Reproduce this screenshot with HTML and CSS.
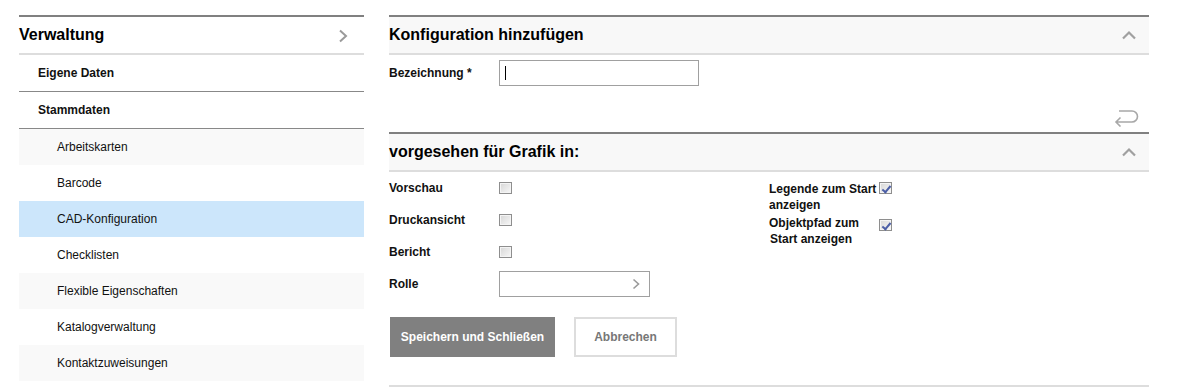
FILE: index.html
```html
<!DOCTYPE html>
<html lang="de">
<head>
  <meta charset="UTF-8" />
  <title>CAD-Konfiguration</title>
  <link rel="stylesheet" href="styles.css">
</head>
<body>
  <div class="page">

    <nav class="sidebar">
      <div class="side-head">
        <span>Verwaltung</span>
        <svg class="chev" width="12" height="14" viewBox="0 0 12 14"><path d="M3 1.5 L9 7 L3 12.5" fill="none" stroke="#9a9a9a" stroke-width="2"/></svg>
      </div>
      <div class="side-group">Eigene Daten</div>
      <div class="side-group">Stammdaten</div>
      <ul class="side-list">
        <li class="alt">Arbeitskarten</li>
        <li>Barcode</li>
        <li class="active">CAD-Konfiguration</li>
        <li>Checklisten</li>
        <li class="alt">Flexible Eigenschaften</li>
        <li>Katalogverwaltung</li>
        <li class="alt">Kontaktzuweisungen</li>
      </ul>
    </nav>

    <main class="main">
      <section class="panel">
        <div class="panel-head">
          <h2>Konfiguration hinzufügen</h2>
          <svg width="16" height="10" viewBox="0 0 16 10"><path d="M2 8.5 L8 2.5 L14 8.5" fill="none" stroke="#a0a0a0" stroke-width="2.2"/></svg>
        </div>
        <div class="panel-body">
          <div class="field">
            <label class="lbl">Bezeichnung *</label>
            <div class="text-input"><span class="caret"></span></div>
          </div>
          <div class="undo-row">
            <svg width="26" height="19" viewBox="0 0 26 19"><path d="M5 3 H18 A5.5 5.5 0 0 1 18 14 H2 M6.5 9.5 L2 14 L6.5 18.5" fill="none" stroke="#a8a8a8" stroke-width="1.6"/></svg>
          </div>
        </div>
      </section>

      <section class="panel">
        <div class="panel-head">
          <h2>vorgesehen für Grafik in:</h2>
          <svg width="16" height="10" viewBox="0 0 16 10"><path d="M2 8.5 L8 2.5 L14 8.5" fill="none" stroke="#a0a0a0" stroke-width="2.2"/></svg>
        </div>
        <div class="grid">
          <div class="col-left">
            <div class="field row">
              <label class="lbl">Vorschau</label>
              <input type="checkbox" class="cb">
            </div>
            <div class="field row">
              <label class="lbl">Druckansicht</label>
              <input type="checkbox" class="cb">
            </div>
            <div class="field row">
              <label class="lbl">Bericht</label>
              <input type="checkbox" class="cb">
            </div>
            <div class="field row">
              <label class="lbl">Rolle</label>
              <div class="select">
                <svg width="10" height="12" viewBox="0 0 10 12"><path d="M2.5 1.5 L7.5 6 L2.5 10.5" fill="none" stroke="#9a9a9a" stroke-width="1.6"/></svg>
              </div>
            </div>
          </div>
          <div class="col-right">
            <div class="field multi">
              <label class="lbl">Legende zum Start anzeigen</label>
              <input type="checkbox" class="cb" checked>
            </div>
            <div class="field multi second">
              <label class="lbl">Objektpfad zum<br><span class="indent">Start anzeigen</span></label>
              <input type="checkbox" class="cb" checked>
            </div>
          </div>
        </div>
        <div class="actions">
          <button class="btn primary">Speichern und Schließen</button>
          <button class="btn secondary">Abbrechen</button>
        </div>
      </section>
      <div class="end-line"></div>
    </main>

  </div>
</body>
</html>
```

FILE: styles.css
```css
body {
  margin: 0;
  padding: 15px 0 0;
  font-family: "Liberation Sans", Arial, sans-serif;
  font-size: 12px;
  color: #111;
  background: #fff;
}

.page {
  display: flex;
  align-items: flex-start;
}

/* sidebar */

.sidebar {
  margin-left: 19px;
  width: 345px;
  border-top: 2px solid #808080;
}

.side-head {
  height: 36px;
  display: flex;
  align-items: center;
  justify-content: space-between;
  padding-right: 15px;
  border-bottom: 2px solid #dddddd;
  font-size: 16px;
  font-weight: bold;
  color: #000;
}

.side-head .chev {
  margin-top: 1px;
}

.side-group {
  height: 36px;
  line-height: 36px;
  padding-left: 19px;
  font-weight: bold;
  border-bottom: 1px solid #888;
  color: #111;
}

.side-list {
  list-style: none;
  margin: 0;
  padding: 0;
}

.side-list li {
  height: 36px;
  line-height: 36px;
  padding-left: 38px;
  color: #111;
}

.side-list li.alt {
  background: #f9f9f9;
}

.side-list li.active {
  background: #cce6fb;
}

/* main */

.main {
  margin-left: 25px;
  width: 760px;
}

.panel {
  border-top: 2px solid #808080;
}

.panel-head {
  height: 36px;
  display: flex;
  align-items: center;
  justify-content: space-between;
  padding-right: 12px;
  background: #f8f8f8;
  border-bottom: 2px solid #dddddd;
}

.panel-head h2 {
  margin: 0;
  font-size: 16px;
  font-weight: bold;
  color: #000;
}

.panel-body {
  padding-top: 5px;
}

.field {
  display: flex;
  align-items: center;
}

.lbl {
  width: 110px;
  flex-shrink: 0;
  font-weight: bold;
  color: #111;
}

.text-input {
  box-sizing: border-box;
  width: 200px;
  height: 26px;
  border: 1px solid #a0a0a0;
  display: flex;
  align-items: center;
  padding-left: 5px;
}

.caret {
  width: 1px;
  height: 14px;
  background: #000;
}

.undo-row {
  display: flex;
  justify-content: flex-end;
  padding: 22px 9px 5px 0;
}

.undo-row svg {
  display: block;
}

.grid {
  display: flex;
}

.col-left {
  width: 380px;
}

.row {
  height: 32px;
}

.cb {
  appearance: none;
  -webkit-appearance: none;
  margin: 0;
  width: 13px;
  height: 12px;
  border: 1px solid #8e8e8e;
  box-shadow: inset 0 0 0 1px #f4f4f4;
  background: linear-gradient(135deg, #d6d6d6, #f8f8f8);
  position: relative;
}

.cb:checked::after {
  content: "";
  position: absolute;
  left: 4px;
  top: 1px;
  width: 3px;
  height: 7px;
  border-right: 2px solid #4b5ea6;
  border-bottom: 2px solid #4b5ea6;
  transform: rotate(40deg);
}

.select {
  box-sizing: border-box;
  width: 151px;
  height: 26px;
  border: 1px solid #a0a0a0;
  display: flex;
  align-items: center;
  justify-content: flex-end;
  padding-right: 8px;
}

.col-right {
  padding-top: 9px;
}

.multi {
  align-items: flex-start;
  line-height: 16px;
}

.multi .cb {
  margin-top: 1px;
}

.multi.second {
  margin-top: 2px;
}

.multi.second .cb {
  margin-top: 4px;
}

.indent {
  padding-left: 1px;
}

.actions {
  display: flex;
  gap: 19px;
  padding: 17px 0 28px 1px;
}

.btn {
  height: 40px;
  font-family: "Liberation Sans", Arial, sans-serif;
  font-size: 12px;
  font-weight: bold;
  cursor: pointer;
}

.btn.primary {
  width: 165px;
  background: #808080;
  color: #fff;
  border: none;
}

.btn.secondary {
  width: 103px;
  background: #fff;
  color: #777;
  border: 2px solid #dddddd;
}

.end-line {
  height: 2px;
  background: #dddddd;
}
```
